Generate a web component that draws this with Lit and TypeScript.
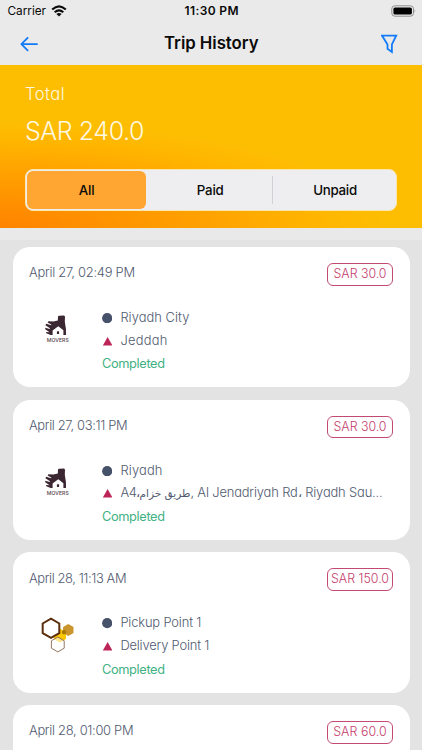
import { LitElement, html, css, nothing } from "lit";
import { customElement, property } from "lit/decorators.js";

/* A single line of text tracked so that it fills the given width. */
@customElement("fit-text")
class FitText extends LitElement {
  @property({ type: Number }) width = 0;
  @property() text = "";

  static styles = css`
    :host { display: inline-block; white-space: pre; flex: none; }
  `;

  updated() {
    const span = this.renderRoot.querySelector("span") as HTMLElement;
    span.style.letterSpacing = "0px";
    const natural = span.getBoundingClientRect().width;
    const count = Math.max(1, this.text.length - 1);
    span.style.letterSpacing = `${(this.width - natural) / count}px`;
  }

  render() {
    return html`<span>${this.text}</span>`;
  }
}

type Run = [text: string, width: number, arabic?: boolean];
interface Trip {
  date: Run;
  fare: Run;
  logo?: "movers" | "hive";
  from?: Run[];
  to?: Run[];
}

const trips: Trip[] = [
  { date: ["April 27, 02:49 PM", 106], fare: ["SAR 30.0", 53], logo: "movers",
    from: [["Riyadh City", 69]], to: [["Jeddah", 47]] },
  { date: ["April 27, 03:11 PM", 98.5], fare: ["SAR 30.0", 53], logo: "movers",
    from: [["Riyadh", 42]],
    to: [["A4،", 20], ["طريق خزام", 47, true], [", Al Jenadriyah Rd، Riyadh Sau...", 192]] },
  { date: ["April 28, 11:13 AM", 97.5], fare: ["SAR 150.0", 58], logo: "hive",
    from: [["Pickup Point 1", 81]], to: [["Delivery Point 1", 89]] },
  { date: ["April 28, 01:00 PM", 104.5], fare: ["SAR 60.0", 53.5] },
];

const hex = (cx: number, cy: number, r: number) =>
  [0, 1, 2, 3, 4, 5]
    .map((i) => {
      const a = (Math.PI / 3) * i + Math.PI / 6;
      return `${(cx + r * Math.cos(a)).toFixed(2)},${(cy + r * Math.sin(a)).toFixed(2)}`;
    })
    .join(" ");

const moversLogo = html`<svg class="logo" viewBox="0 0 50 50">
  <path fill="#3b2731" d="M23 10.4 Q23.2 9.7 24.2 9.7 L28.8 9.6 Q30 9.7 30 10.9 L29.8 15.5 L30.3 19 Q31.4 23 31 28.9 L28.4 28.9 L28.4 24.2 L23.3 20.3 L17.6 24.6 L17.6 28.9 L15.6 28.9 L11.4 27.2 L11 26 L14.6 26.2 L10.2 23.3 L10.3 21.8 L14.6 23 L15 22.3 L10.4 19.2 L11.2 17.8 L16.2 19.3 L16.2 18.6 L12.6 16.5 L13.4 15.2 L18.4 15.6 L22.8 14.6 Z"/>
  <path fill="#3b2731" d="M21.9 28 V25.8 Q23 24.2 24.1 25.8 V28Z"/>
  <text class="logo-name" x="11.8" y="35.8" textLength="22" lengthAdjust="spacingAndGlyphs">MOVERS</text>
</svg>`;

const hiveLogo = html`<svg class="logo" viewBox="0 0 50 50">
  <polygon points=${hex(24.9, 24.6, 7)} fill="#fdc800"/>
  <polygon points=${hex(33.3, 19, 6)} fill="#c9952c"/>
  <polygon points=${hex(29, 21.2, 2.4)} fill="#a97a08"/>
  <polygon points=${hex(16, 17.3, 9.6)} fill="#fff" stroke="#5c2e0c" stroke-width="2"/>
  <polygon points=${hex(22.8, 33.5, 7.4)} fill="#fff" fill-opacity=".55" stroke="#8a684f" stroke-width=".9"/>
</svg>`;

@customElement("trip-card")
class TripCard extends LitElement {
  @property({ attribute: false }) trip!: Trip;

  static styles = css`
    :host { display: block; flex: none; height: 140.3px; box-sizing: border-box; border-radius: 17px;
      background: #fff; padding: 16px 16.5px 0 16.5px; color: #505a70; font-size: 12.9px;
      font-weight: 350; }
    .top { display: flex; justify-content: space-between; align-items: flex-start; height: 43px; }
    .date { line-height: 19px; height: 19px; padding-top: 0.2px; }
    .fare { width: 66px; height: 22.6px; box-sizing: border-box; border: 1.3px solid #c34a72;
      border-radius: 6px; display: flex; justify-content: center; line-height: 20.2px; color: #c5406c;
      font-size: 12.4px; }
    .body { display: grid; grid-template-columns: 73px 1fr; }
    .logo { width: 50px; height: 50px; margin: 0 0 0 6px; display: block; }
    .logo-name { font: 500 5.4px Inter, sans-serif; fill: #54434b; }
    .stops { padding-top: 1px; }
    .row { display: flex; align-items: center; height: 22.6px; line-height: 22.6px; }
    .mark { width: 10.4px; height: 10.4px; margin: 0 8px 0 0; flex: none; }
    .ar { font-family: "DejaVu Sans", sans-serif; font-size: 10.5px; margin-left: 3.5px; width: 46.5px;
      text-align: center; white-space: nowrap; font-weight: 400; }
    .status { color: #3fb183; height: 22.6px; line-height: 23px; font-size: 12.8px; font-weight: 400; }
  `;

  run([text, width, arabic]: Run) {
    return arabic
      ? html`<span class="ar" dir="rtl">${text}</span>`
      : html`<fit-text .text=${text} .width=${width}></fit-text>`;
  }

  details(t: Trip) {
    return html`
      <div class="body">
        ${t.logo === "movers" ? moversLogo : hiveLogo}
        <div class="stops">
          <div class="row">
            <svg class="mark" viewBox="0 0 10 10"><circle cx="5" cy="5" r="4.9" fill="#46516a"/></svg>
            ${t.from?.map((r) => this.run(r))}
          </div>
          <div class="row">
            <svg class="mark" viewBox="0 0 10 10"><path d="M5.4 1 L10 9.2 H.8 Z" fill="#bd2457"/></svg>
            ${t.to?.map((r) => this.run(r))}
          </div>
          <div class="status">${this.run(["Completed", 63])}</div>
        </div>
      </div>`;
  }

  render() {
    const t = this.trip;
    return html`
      <div class="top">
        <div class="date">${this.run(t.date)}</div>
        <div class="fare">${this.run(t.fare)}</div>
      </div>
      ${t.logo ? this.details(t) : nothing}`;
  }
}

@customElement("app-root")
class AppRoot extends LitElement {
  static styles = css`
    :host { display: flex; flex-direction: column; width: 422px; height: 750px; overflow: hidden;
      background: #e3e3e3; font-family: Inter, "Liberation Sans", sans-serif;
      font-feature-settings: "cv11" 1; }
    .head { height: 65.4px; flex: none; background: #eaeaea; color: #0a0a0a;
      font-feature-settings: normal; }
    .statusbar { height: 22px; display: grid; grid-template-columns: 1fr auto 1fr; align-items: center;
      padding: 0 6px 0 7.5px; font-size: 11.8px; line-height: 22px; }
    .carrier { display: flex; align-items: center; gap: 5px; }
    .wifi { width: 16px; height: 12px; }
    .clock { font-weight: 600; font-size: 12px; }
    .battery { width: 26px; height: 12px; justify-self: end; }
    .nav { height: 43px; display: grid; grid-template-columns: 1fr auto 1fr; align-items: center;
      padding: 0 24px 0 20px; }
    .title { font-size: 16.8px; font-weight: 600; line-height: 43px; padding-left: 0.5px; }
    .title fit-text { margin: 0 -2px 0 2px; }
    .back { width: 18px; height: 16px; }
    .filter { width: 17px; height: 20px; justify-self: end; }
    .hero { height: 163px; flex: none; box-sizing: border-box; padding: 18.1px 25px 0; color: #fff8e0;
      background: radial-gradient(ellipse 390px 106px at 0% 100%, #ff8300 0%, #ff9100 25%, #ffa300 55%, #ffb600 83%, #fdbe02 100%), #fdbe02; }
    .label { font-size: 16.6px; line-height: 22px; font-weight: 350; height: 22px; }
    .sum { font-size: 25px; line-height: 36px; font-weight: 340; height: 36px; margin-top: 8px; }
    .tabs { height: 42px; box-sizing: border-box; margin-top: 19.6px; padding: 1.2px; border-radius: 8px;
      background: #eeeef0; border: 1px solid #fbe6ae; display: grid;
      grid-template-columns: 119px 127px 1fr; align-items: stretch; color: #0a0a0a;
      font-feature-settings: normal; }
    .tab { display: flex; align-items: center; justify-content: center; font-size: 13.3px; font-weight: 450; }
    .tab.on { background: #fea532; border-radius: 6px; font-weight: 500; }
    .tab.mid { border-right: 1px solid #d2d2d6; margin: 5px 0; padding-left: 2px; }
    .tab.last { padding-left: 2px; }
    .strip { height: 11.5px; flex: none; background: #e9e9e9; }
    .list { display: flex; flex-direction: column; gap: 12.4px; padding: 7.1px 12.5px 0; }
  `;

  render() {
    return html`
      <header class="head">
        <div class="statusbar">
          <div class="carrier">
            <fit-text .text=${"Carrier"} .width=${38.5}></fit-text>
            <svg class="wifi" viewBox="0 0 16 12" fill="none" stroke="#0a0a0a" stroke-width="2.1">
              <path d="M1.2 4.6 Q8 -1.8 14.8 4.6"/><path d="M3.7 7.2 Q8 3.4 12.3 7.2"/>
              <path d="M8 11.5 L5.4 8.9 Q8 7 10.6 8.9 Z" fill="#0a0a0a" stroke="none"/>
            </svg>
          </div>
          <div class="clock"><fit-text .text=${"11:30 PM"} .width=${54}></fit-text></div>
          <svg class="battery" viewBox="0 0 26 12">
            <rect x="1.8" y=".8" width="21.7" height="10.4" rx="3" fill="none" stroke="#8f8f8f"/>
            <rect x="3.4" y="2.4" width="18.5" height="7.2" rx="1.6" fill="#000"/>
            <path d="M24.6 4.2 Q26 6 24.6 7.8Z" fill="#8f8f8f"/>
          </svg>
        </div>
        <div class="nav">
          <svg class="back" viewBox="0 0 18 16" fill="none" stroke="#137bf8" stroke-width="1.8" stroke-linecap="round" stroke-linejoin="round">
            <path d="M17 8.2H1.6M7.6 1.8 L1.4 8.2 L7.6 14.4"/>
          </svg>
          <div class="title"><fit-text .text=${"Trip History"} .width=${94.5}></fit-text></div>
          <svg class="filter" viewBox="0 0 17 20" fill="none" stroke="#137bf8" stroke-width="1.8">
            <path d="M1 1.6 H15.2 L10.9 10.4 V18 L6.5 14.8 V10.4 Z"/>
          </svg>
        </div>
      </header>
      <section class="hero">
        <div class="label"><fit-text .text=${"Total"} .width=${39.5}></fit-text></div>
        <div class="sum"><fit-text .text=${"SAR 240.0"} .width=${119.5}></fit-text></div>
        <div class="tabs">
          <div class="tab on"><fit-text .text=${"All"} .width=${16}></fit-text></div>
          <div class="tab mid"><fit-text .text=${"Paid"} .width=${27}></fit-text></div>
          <div class="tab last"><fit-text .text=${"Unpaid"} .width=${44}></fit-text></div>
        </div>
      </section>
      <div class="strip"></div>
      <main class="list">
        ${trips.map((t) => html`<trip-card .trip=${t}></trip-card>`)}
      </main>`;
  }
}
